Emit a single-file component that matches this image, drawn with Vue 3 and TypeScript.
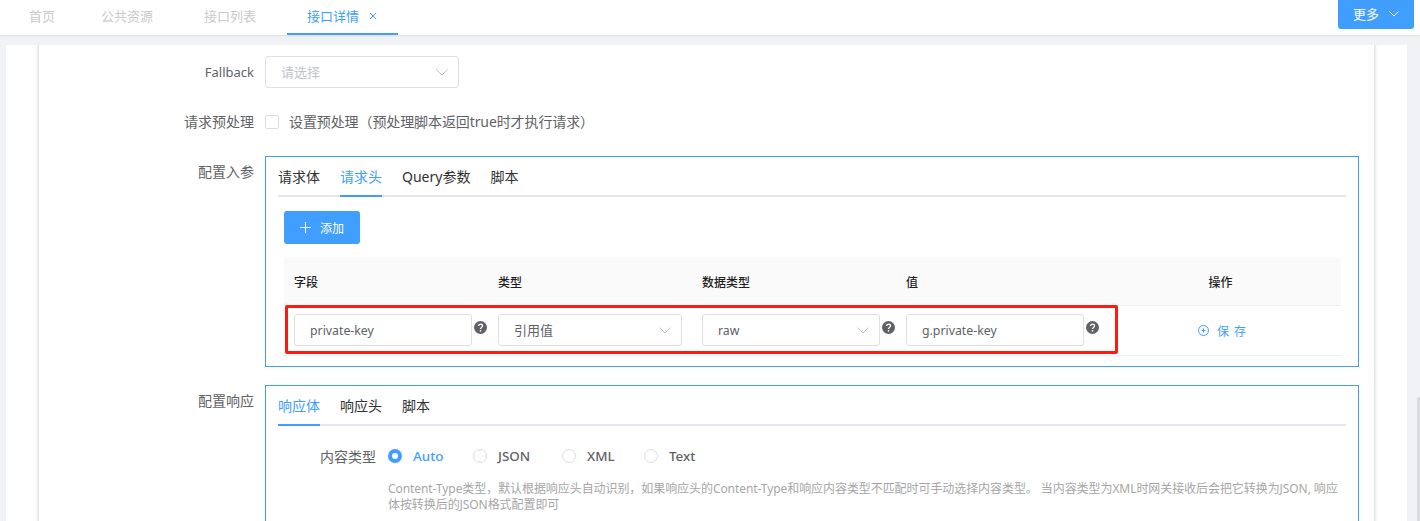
<script setup lang="ts">
interface NavTab { label: string; active?: boolean }
interface Cell { value: string; select: boolean; help: boolean; kind: string }

const navTabs: NavTab[] = [
  { label: '首页' },
  { label: '公共资源' },
  { label: '接口列表' },
  { label: '接口详情', active: true },
]
const requestTabs: string[] = ['请求体', '请求头', 'Query参数', '脚本']
const responseTabs: string[] = ['响应体', '响应头', '脚本']
const headers: string[] = ['字段', '类型', '数据类型', '值']
const cells: Cell[] = [
  { value: 'private-key', select: false, help: true, kind: 'latin' },
  { value: '引用值', select: true, help: false, kind: 'wide' },
  { value: 'raw', select: true, help: true, kind: 'latin' },
  { value: 'g.private-key', select: false, help: true, kind: 'latin' },
]
const radios: string[] = ['Auto', 'JSON', 'XML', 'Text']
</script>

<template>
  <div class="page">
    <header class="topbar">
      <nav class="nav">
        <div v-for="t in navTabs" :key="t.label" class="nav-tab" :class="{ active: t.active }">
          <span>{{ t.label }}</span>
          <svg v-if="t.active" class="close" width="8" height="8" viewBox="0 0 8 8">
            <path d="M1 1l6 6M7 1L1 7" stroke="#409eff" stroke-width="1" fill="none" />
          </svg>
        </div>
      </nav>
      <button class="more">
        <span>更多</span>
        <svg width="10" height="6" viewBox="0 0 10 6">
          <path d="M.5.5L5 5 9.5.5" stroke="#fff" stroke-width="1" fill="none" />
        </svg>
      </button>
    </header>

    <main class="main">
      <div class="panel">
        <div class="card">
          <div class="form-row">
            <label class="label fallback">Fallback</label>
            <div class="input select-fallback placeholder">
              <span>请选择</span>
              <svg class="chev" width="12" height="7" viewBox="0 0 12 7">
                <path d="M.5.5L6 6 11.5.5" stroke="#c0c4cc" stroke-width="1" fill="none" />
              </svg>
            </div>
          </div>

          <div class="form-row">
            <label class="label">请求预处理</label>
            <div class="check-line">
              <span class="checkbox"></span>
              <span class="check-text">设置预处理（预处理脚本返回true时才执行请求）</span>
            </div>
          </div>

          <div class="form-row top">
            <label class="label">配置入参</label>
            <section class="box req-box">
              <div class="tabs">
                <div v-for="(t, i) in requestTabs" :key="t" class="tab" :class="{ on: i === 1 }">{{ t }}</div>
              </div>
              <button class="add">
                <svg width="11" height="11" viewBox="0 0 11 11">
                  <path d="M5.5 0v11M0 5.5h11" stroke="#fff" stroke-width="1" fill="none" />
                </svg>
                <span>添加</span>
              </button>
              <div class="table">
                <div class="thead">
                  <div v-for="h in headers" :key="h" class="th">{{ h }}</div>
                  <div class="th op">操作</div>
                </div>
                <div class="tbody">
                  <div v-for="c in cells" :key="c.value" class="td">
                    <div class="input cell-input" :class="c.kind">
                      <span>{{ c.value }}</span>
                      <svg v-if="c.select" class="chev" width="12" height="7" viewBox="0 0 12 7">
                        <path d="M.5.5L6 6 11.5.5" stroke="#c0c4cc" stroke-width="1" fill="none" />
                      </svg>
                    </div>
                    <svg v-if="c.help" class="help" width="13" height="13" viewBox="0 0 13 13">
                      <circle cx="6.5" cy="6.5" r="6.5" fill="#606266" />
                      <path d="M4.5 5.1c0-1.2.9-1.9 2-1.9s2 .7 2 1.7c0 1.5-2 1.5-2 3" stroke="#fff" stroke-width="1.3" fill="none" />
                      <circle cx="6.5" cy="9.9" r=".8" fill="#fff" />
                    </svg>
                  </div>
                  <div class="td op">
                    <span class="save">
                      <svg width="11" height="11" viewBox="0 0 11 11">
                        <circle cx="5.5" cy="5.5" r="5" stroke="#409eff" stroke-width="1" fill="none" />
                        <path d="M3.5 5.5h4M5.5 3.5v4" stroke="#409eff" stroke-width="1" fill="none" />
                      </svg>
                      <span>保 存</span>
                    </span>
                  </div>
                  <div class="highlight"></div>
                </div>
              </div>
            </section>
          </div>

          <div class="form-row top">
            <label class="label">配置响应</label>
            <section class="box resp-box">
              <div class="tabs">
                <div v-for="(t, i) in responseTabs" :key="t" class="tab" :class="{ on: i === 0 }">{{ t }}</div>
              </div>
              <div class="radio-row">
                <label class="radio-label">内容类型</label>
                <div class="radios">
                  <div v-for="(r, i) in radios" :key="r" class="radio" :class="{ on: i === 0 }">
                    <span class="dot"></span>
                    <span>{{ r }}</span>
                  </div>
                </div>
              </div>
              <p class="hint">Content-Type类型，默认根据响应头自动识别，如果响应头的Content-Type和响应内容类型不匹配时可手动选择内容类型。 当内容类型为XML时网关接收后会把它转换为JSON, 响应<br>体按转换后的JSON格式配置即可</p>
            </section>
          </div>
        </div>
      </div>
      <div class="scroll-thumb"></div>
    </main>
  </div>
</template>

<style>
html, body { margin: 0; overflow: hidden; }
</style>

<style scoped>
* { box-sizing: border-box; }
.page {
  position: relative;
  display: flex;
  flex-direction: column;
  width: 1420px;
  height: 521px;
  overflow: hidden;
  background: #f0f2f5;
  font-family: "Noto Sans", "Noto Sans CJK SC", sans-serif;
  font-size: 13px;
  color: #606266;
}
.topbar {
  position: relative;
  z-index: 1;
  display: flex;
  justify-content: space-between;
  flex: 0 0 35px;
  height: 35px;
  padding-right: 6px;
  background: #fff;
  box-shadow: 0 1px 2px rgba(0, 0, 0, .08);
}
.nav { display: flex; padding-left: 29px; }
.nav-tab {
  display: flex;
  align-items: center;
  gap: 10px;
  height: 35px;
  margin-right: 48px;
  padding-bottom: 5px;
  color: #c8c9cc;
}
.nav-tab:nth-child(2), .nav-tab:nth-child(3) { margin-right: 51px; }
.nav-tab:nth-child(1) { margin-right: 46px; }
.nav-tab.active {
  margin-left: -20px;
  margin-right: 0;
  width: 111px;
  padding-left: 20px;
  color: #409eff;
  border-bottom: 2px solid #409eff;
  padding-bottom: 3px;
  gap: 10px;
}
.close { margin-top: 2px; }
.more {
  display: flex;
  align-items: center;
  justify-content: center;
  gap: 10px;
  width: 76px;
  height: 29px;
  padding: 0 0 2px;
  border: 0;
  border-radius: 0 0 3px 3px;
  background: #409eff;
  color: #fff;
  font: inherit;
}
.main {
  display: flex;
  flex: 1;
  min-height: 0;
  padding: 10px 13px 0 6px;
}
.panel {
  flex: 1;
  min-width: 0;
  overflow: hidden;
  background: #fff;
  padding: 0 33px;
}
.card {
  margin-top: -10px;
  padding: 21px 15px 40px 0;
  background: #fff;
  box-shadow: 0 0 4px rgba(0, 0, 0, .25);
  height: 600px;
}
.form-row {
  display: flex;
  align-items: center;
  gap: 11px;
  margin-bottom: 18px;
}
.form-row.top { align-items: flex-start; }
.label {
  flex: 0 0 215px;
  height: 32px;
  line-height: 31px;
  text-align: right;
  font-size: 14px;
}
.label.fallback { font-size: 13px; line-height: 33px; }
.input {
  position: relative;
  display: flex;
  align-items: center;
  height: 32px;
  padding: 0 15px 1px;
  border: 1px solid #dcdfe6;
  border-radius: 3px;
  background: #fff;
}
.placeholder { color: #c0c4cc; }
.select-fallback { width: 194px; }
.chev { position: absolute; right: 10px; top: 12px; }
.check-line { display: flex; align-items: center; gap: 10px; height: 32px; }
.check-text { font-size: 14px; letter-spacing: -.1px; padding-bottom: 3px; }
.checkbox {
  width: 14px;
  height: 14px;
  border: 1px solid #dcdfe6;
  border-radius: 2px;
}
.box {
  flex: 0 0 1094px;
  width: 1094px;
  padding: 0 12px;
  border: 1px solid #409eff;
}
.req-box { height: 211px; }
.resp-box { height: 220px; }
.tabs {
  display: flex;
  gap: 20px;
  height: 40px;
  border-bottom: 2px solid #e4e7ed;
}
.tab {
  position: relative;
  height: 40px;
  line-height: 40px;
  font-size: 14px;
  color: #303133;
}
.tab.on { color: #409eff; }
.tab.on::after {
  content: "";
  position: absolute;
  left: 0;
  right: 0;
  bottom: 0;
  height: 2px;
  background: #409eff;
}
.add {
  display: flex;
  align-items: center;
  justify-content: center;
  gap: 9px;
  width: 76px;
  height: 33px;
  margin: 14px 0 0 6px;
  padding: 0;
  border: 0;
  border-radius: 3px;
  background: #409eff;
  color: #fff;
  font: inherit;
  font-size: 12px;
}
.table { width: 1057px; margin: 13px 0 0 6px; }
.thead, .tbody {
  position: relative;
  display: grid;
  grid-template-columns: 204px 204px 204px 204px 241px;
  border-bottom: 1px solid #ebeef5;
}
.thead { height: 49px; background: #fafafa; }
.tbody { height: 50px; }
.th {
  padding-left: 10px;
  line-height: 51px;
  font-size: 12px;
  font-weight: 500;
  color: #1f1f1f;
}
.th.op { padding-left: 0; text-align: center; }
.td {
  display: flex;
  align-items: flex-start;
  padding: 8px 0 0 10px;
}
.cell-input { width: 178px; flex: none; }
.cell-input.wide { width: 184px; }
.cell-input.latin { font-size: 12.3px; padding-bottom: 0; }
.help { margin: 7px 0 0 2px; flex: none; }
.td.op { justify-content: center; padding: 0; align-items: center; }
.save {
  display: flex;
  align-items: center;
  gap: 8px;
  margin-left: 4px;
  font-size: 12px;
  color: #409eff;
  letter-spacing: 1px;
}
.highlight {
  position: absolute;
  left: 1px;
  top: -1px;
  width: 833px;
  height: 49px;
  border: 3px solid #ff1a0f;
  border-radius: 2px;
  pointer-events: none;
}
.radio-row {
  display: flex;
  align-items: center;
  gap: 12px;
  height: 32px;
  margin-top: 14px;
}
.radio-label { width: 98px; text-align: right; font-size: 14px; }
.radios { display: flex; }
.radio {
  display: flex;
  align-items: center;
  gap: 11px;
  font-weight: 500;
  font-size: 13.4px;
  width: 85px;
}
.radio:nth-child(2) { width: 89px; }
.radio:nth-child(3) { width: 82px; }
.radio.on { color: #409eff; }
.dot {
  width: 14px;
  height: 14px;
  border: 1px solid #dcdfe6;
  border-radius: 50%;
  background: #fff;
}
.radio.on .dot { border: 4px solid #409eff; }
.hint {
  width: 960px;
  margin: 9px 0 0 110px;
  font-size: 12px;
  letter-spacing: -.07px;
  line-height: 16px;
  color: #a6a6a6;
  white-space: nowrap;
}
.scroll-thumb {
  position: absolute;
  right: 0;
  top: 397px;
  width: 3px;
  height: 124px;
  background: #d9dadd;
  border-radius: 2px 0 0 0;
}
</style>
